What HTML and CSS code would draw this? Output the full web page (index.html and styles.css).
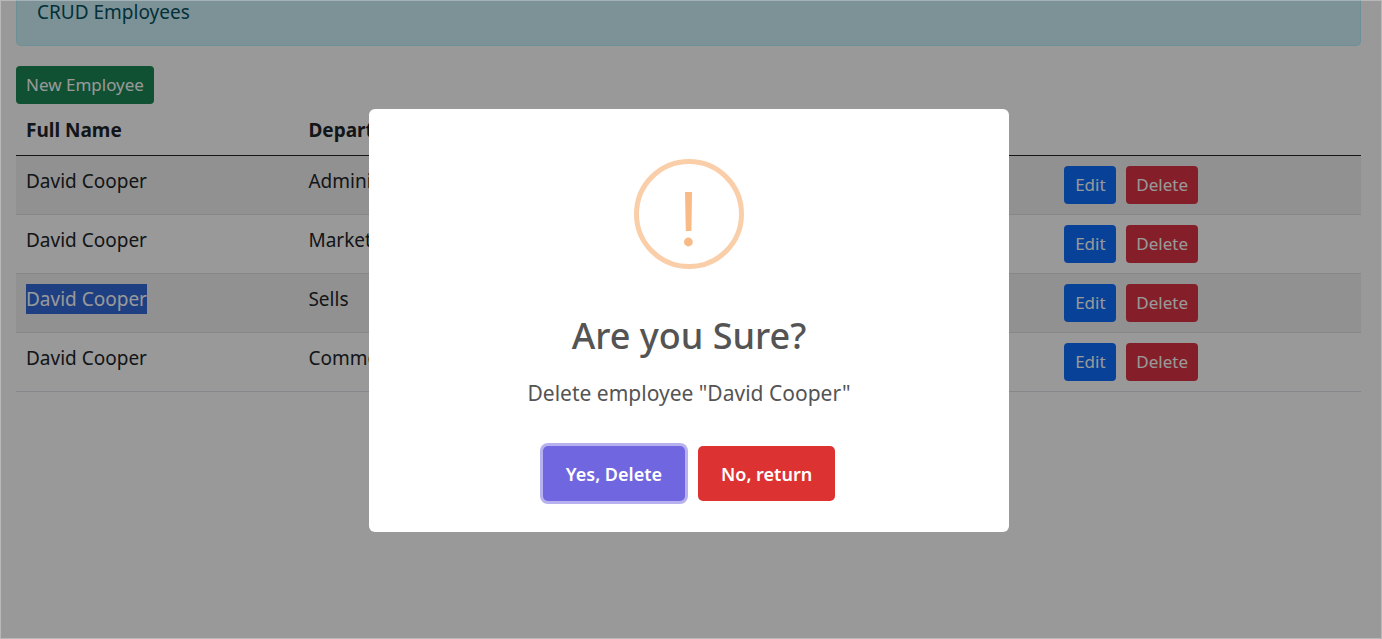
FILE: index.html
```html
<!DOCTYPE html>
<html lang="en">
<head>
<meta charset="utf-8">
<meta name="viewport" content="width=device-width, initial-scale=1">
<title>CRUD Employees</title>
<link rel="stylesheet" href="styles.css">
</head>
<body>
<main class="page">
  <div class="alert">CRUD Employees</div>
  <button type="button" class="btn btn-success">New Employee</button>
  <table class="table">
    <colgroup><col class="col-name"><col class="col-department"><col class="col-actions"></colgroup>
    <thead>
      <tr><th scope="col">Full Name</th><th scope="col">Department</th><td></td></tr>
    </thead>
    <tbody>
      <tr><td>David Cooper</td><td>Administration</td><td><div class="actions"><button type="button" class="btn btn-primary">Edit</button><button type="button" class="btn btn-danger">Delete</button></div></td></tr>
      <tr><td>David Cooper</td><td>Marketing</td><td><div class="actions"><button type="button" class="btn btn-primary">Edit</button><button type="button" class="btn btn-danger">Delete</button></div></td></tr>
      <tr><td><span class="selected">David Cooper</span></td><td>Sells</td><td><div class="actions"><button type="button" class="btn btn-primary">Edit</button><button type="button" class="btn btn-danger">Delete</button></div></td></tr>
      <tr><td>David Cooper</td><td>Commerce</td><td><div class="actions"><button type="button" class="btn btn-primary">Edit</button><button type="button" class="btn btn-danger">Delete</button></div></td></tr>
    </tbody>
  </table>
</main>
<div class="overlay">
  <section class="dialog" role="dialog" aria-modal="true" aria-labelledby="dialog-title" aria-describedby="dialog-text">
    <svg class="dialog-icon" viewBox="0 0 110 110" aria-hidden="true">
      <circle cx="55" cy="55" r="52.5" fill="none" stroke="#facea8" stroke-width="5"/>
      <path d="M51 33h7l-.6 39h-5.6z" fill="#f8bb86"/>
      <circle cx="54.4" cy="83" r="4.4" fill="#f8bb86"/>
    </svg>
    <h2 class="dialog-title" id="dialog-title">Are you Sure?</h2>
    <p class="dialog-text" id="dialog-text">Delete employee "David Cooper"</p>
    <div class="dialog-actions">
      <button type="button" class="dialog-btn confirm">Yes, Delete</button>
      <button type="button" class="dialog-btn cancel">No, return</button>
    </div>
  </section>
</div>
</body>
</html>
```
FILE: styles.css
```css
* {
  box-sizing: border-box;
}

body {
  margin: 0;
  background: #fff;
  color: #212529;
  font-family: "Segoe UI", "Noto Sans", sans-serif;
  font-size: 19px;
  line-height: 30px;
}

button {
  font-family: inherit;
  cursor: pointer;
}

.page {
  padding: 0 21px 0 16px;
}

.alert {
  margin-bottom: 20px;
  padding: 0 20px 21px;
  border: 1px solid #b6effb;
  border-top: 0;
  border-radius: 0 0 5px 5px;
  background: #cff4fc;
  color: #055160;
  line-height: 24px;
}

.btn {
  display: block;
  height: 38px;
  min-width: 52px;
  padding: 0 10px;
  border: 0;
  border-radius: 4px;
  color: #fff;
  font-size: 17px;
  line-height: 38px;
}

.btn-success {
  background: #198754;
}

.btn-primary {
  background: #0d6efd;
}

.btn-danger {
  background: #dc3545;
}

.table {
  width: 100%;
  margin-top: 1px;
  border-collapse: separate;
  border-spacing: 0;
  table-layout: fixed;
}

.col-name {
  width: 21%;
}

.col-actions {
  width: 22.8%;
}

.table th,
.table td {
  padding: 10px;
  border-bottom: 1px solid #dee2e6;
  text-align: left;
  vertical-align: top;
}

.table thead th,
.table thead td {
  border-color: #212529;
}

.table tbody tr:nth-child(odd) {
  background: #f2f2f2;
}

.selected {
  display: block;
  width: max-content;
  background: #3269d9;
  color: #fff;
}

.actions {
  display: flex;
  gap: 10px;
}

.overlay {
  position: fixed;
  inset: 0;
  display: flex;
  align-items: center;
  justify-content: center;
  padding: 2px 4px 0 0;
  border: 1px solid rgba(255, 255, 255, 0.3);
  background: rgba(0, 0, 0, 0.4);
}

.dialog {
  display: flex;
  flex-direction: column;
  align-items: center;
  width: 640px;
  max-width: 100%;
  padding: 50px 20px 31px;
  border-radius: 6px;
  background: #fff;
  color: #545454;
  text-align: center;
}

.dialog-icon {
  width: 110px;
  height: 110px;
}

.dialog-title {
  margin: 39px 0 0;
  font-size: 36px;
  font-weight: 500;
  line-height: 56px;
}

.dialog-text {
  margin: 12px 0 0;
  font-size: 21px;
  line-height: 34px;
}

.dialog-actions {
  display: flex;
  gap: 13px;
  margin-top: 36px;
}

.dialog-btn {
  height: 55px;
  padding: 0 23px;
  border: 0;
  border-radius: 5px;
  color: #fff;
  font-size: 18px;
  font-weight: 600;
}

.confirm {
  background: #7066e0;
  box-shadow: 0 0 0 3px #b7b2ef;
}

.cancel {
  background: #dc3232;
}
```
